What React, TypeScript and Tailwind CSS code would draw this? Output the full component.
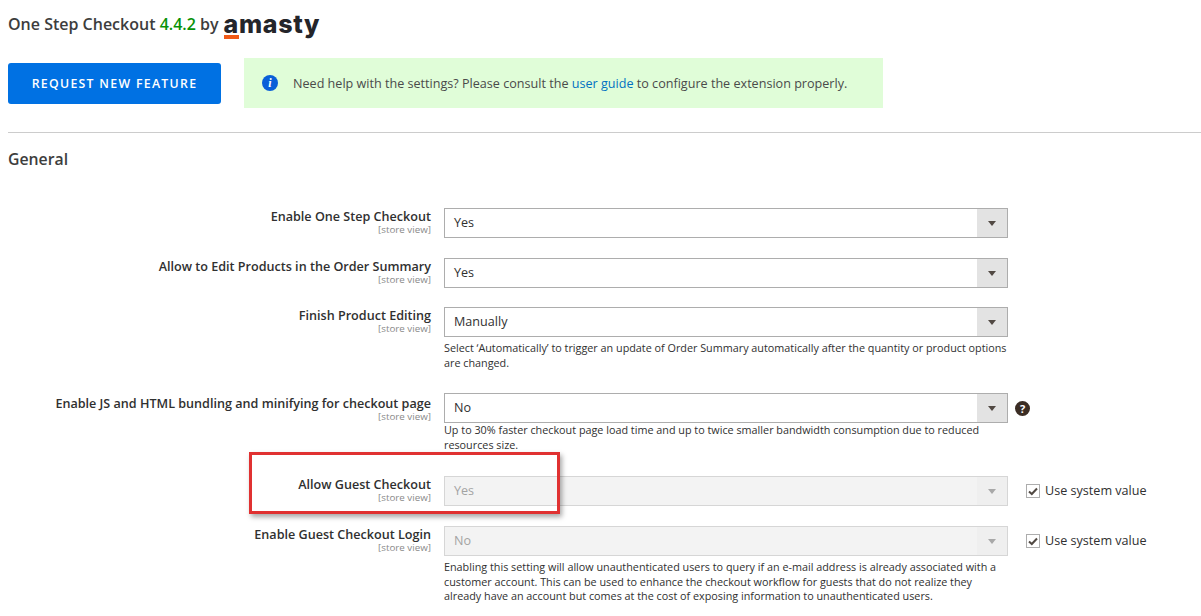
const font = "font-['Open_Sans',sans-serif]";

interface Row { label: string; value: string; disabled?: boolean; note?: string[]; help?: boolean; gap: string; noteGap?: string; labelPad?: string; }

const ROWS: Row[] = [
  { label: "Enable One Step Checkout", value: "Yes", gap: "mb-[20px]" },
  { label: "Allow to Edit Products in the Order Summary", value: "Yes", gap: "mb-[19px]" },
  {
    label: "Finish Product Editing", value: "Manually", gap: "mb-[23px]", noteGap: "mt-[4px]",
    note: ["Select ‘Automatically’ to trigger an update of Order Summary automatically after the quantity or product options", "are changed."],
  },
  {
    label: "Enable JS and HTML bundling and minifying for checkout page", value: "No", help: true, gap: "mb-[24px]", noteGap: "mt-0", labelPad: "pt-[3px]",
    note: ["Up to 30% faster checkout page load time and up to twice smaller bandwidth consumption due to reduced", "resources size."],
  },
  { label: "Allow Guest Checkout", value: "Yes", disabled: true, gap: "mb-[20px]" },
  {
    label: "Enable Guest Checkout Login", value: "No", disabled: true, gap: "", noteGap: "mt-[4px]",
    note: ["Enabling this setting will allow unauthenticated users to query if an e-mail address is already associated with a", "customer account. This can be used to enhance the checkout workflow for guests that do not realize they", "already have an account but comes at the cost of exposing information to unauthenticated users."],
  },
];

function Select({ value, disabled }: { value: string; disabled?: boolean }) {
  return (
    <div className={`w-[564px] h-[30px] flex border ${disabled ? "border-[#d6d6d6] bg-[#f3f3f3]" : "border-[#adadad] bg-white"}`}>
      <span className={`flex-1 pl-[9px] text-[12.6px] leading-[27px] ${disabled ? "text-[#a3a3a3]" : "text-[#303030]"}`}>{value}</span>
      <span className={`w-[30px] flex items-center justify-center ${disabled ? "bg-[#efefef]" : "bg-[#e3e3e3]"}`}>
        <span className={`w-0 h-0 border-x-[4px] border-x-transparent border-t-[5px] ${disabled ? "border-t-[#a8a8a8]" : "border-t-[#514943]"}`} />
      </span>
    </div>
  );
}

function SettingRow({ row }: { row: Row }) {
  return (
    <div className={`flex ${row.gap}`}>
      <div className={`w-[431px] shrink-0 text-right ${row.labelPad ?? "pt-[1px]"}`}>
        <div className="text-[12.6px] leading-[16px] font-semibold text-[#303030]">{row.label}</div>
        <div className="text-[9.8px] leading-[10px] text-[#8a8a8a]">[store view]</div>
      </div>
      <div className="ml-[13px] w-[564px] shrink-0">
        <Select value={row.value} disabled={row.disabled} />
        {row.note && (
          <div className={`${row.noteGap} text-[10.8px] leading-[14.5px] text-[#303030] whitespace-nowrap`}>
            {row.note.map(l => <div key={l}>{l}</div>)}
          </div>
        )}
      </div>
      {row.help && (
        <span className="ml-[7px] mt-[8px] w-[15px] h-[15px] rounded-full bg-[#3b2d24] text-white text-[11px] leading-[15px] font-bold text-center">?</span>
      )}
      {row.disabled && (
        <label className="ml-[18px] h-[30px] flex items-center text-[12.6px] text-[#303030]">
          <span className="w-[14px] h-[14px] border border-[#adadad] bg-white flex items-center justify-center mr-[5px]">
            <svg width="10" height="9" viewBox="0 0 10 9"><path d="M1 4.5 L3.8 7 L9 1.5" fill="none" stroke="#514943" strokeWidth="2" /></svg>
          </span>
          Use system value
        </label>
      )}
    </div>
  );
}

export default function App() {
  return (
    <div className={`relative h-[616px] w-[1201px] overflow-hidden bg-white ${font}`}>
      {/* Header */}
      <div className="h-[58px] pl-[8px] pt-[11px] flex items-start text-[16px] leading-[26px] font-semibold text-[#3d3d3d]">
        <span>One Step Checkout <span className="text-[#079207]">4.4.2</span> by</span>
        <span className="relative ml-[5px] font-['Inter',sans-serif] font-extrabold text-[25px] leading-[26px] tracking-[0.7px] text-[#24252a]">
          amasty
          <span className="absolute left-0 top-[24px] w-[15px] h-[4px] bg-[#f15a16]" />
        </span>
      </div>

      <div className="flex pl-[8px] items-center h-[50px]">
        <button className="w-[213px] h-[41px] pt-[2px] rounded-[3px] bg-[#0071e3] text-white text-[12.3px] font-semibold tracking-[1.3px]">REQUEST NEW FEATURE</button>
        <div className="ml-[23px] w-[639px] h-[50px] bg-[#e0fdd8] flex items-center pl-[18px] text-[12.6px] text-[#4a4a4a]">
          <span className="w-[16px] h-[16px] rounded-full bg-[#0a5fd8] text-white text-[12px] leading-[16px] font-bold italic text-center font-['Liberation_Serif',serif]">i</span>
          <span className="ml-[15px] pt-[2px]">Need help with the settings? Please consult the <span className="text-[#0071c2]">user guide</span> to configure the extension properly.</span>
        </div>
      </div>

      <div className="ml-[8px] mt-[24px] h-px bg-[#cccccc]" />

      <h2 className="ml-[8px] mt-[14px] text-[15.8px] leading-[24px] font-semibold text-[#3d3d3d]">General</h2>

      <div className="mt-[37px]">
        {ROWS.map(r => <SettingRow key={r.label} row={r} />)}
      </div>

      {/* red annotation box */}
      <div className="absolute left-[249px] top-[452px] w-[311px] h-[62px] border-[3px] border-[#e03131] shadow-[2px_3px_5px_rgba(0,0,0,0.35)]" />
    </div>
  );
}
